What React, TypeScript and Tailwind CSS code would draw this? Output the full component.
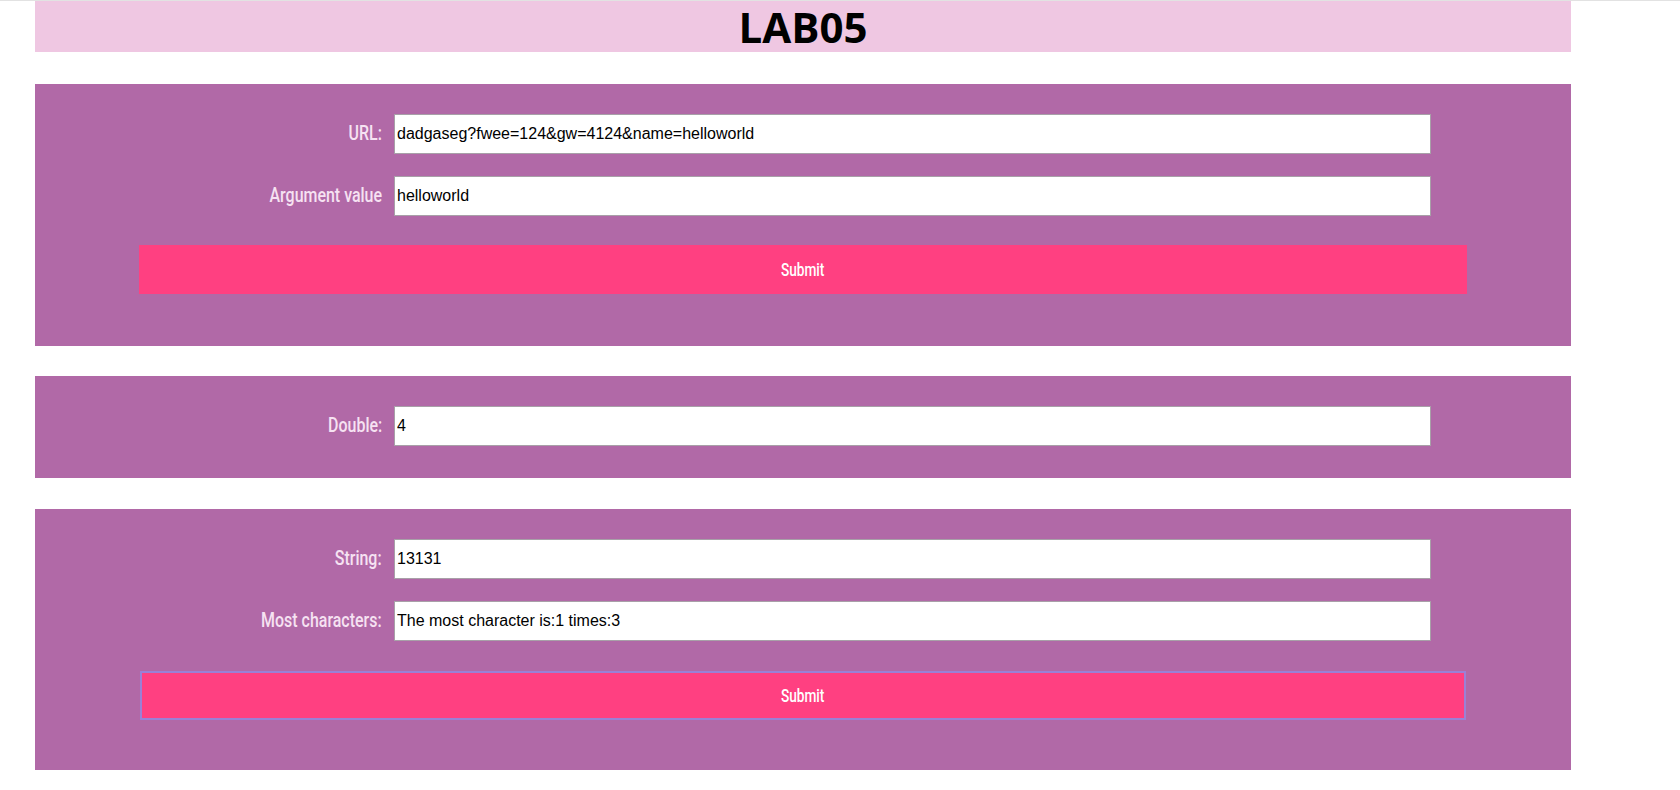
import React from "react";

function Row({ label, value, mt }: { label: string; value: string; mt?: string }) {
  return (
    <div className={`flex items-center ${mt ?? ""}`}>
      <div className="w-[347px] text-right">
        <span className="inline-block origin-right scale-x-[0.76] whitespace-nowrap text-[21px] font-medium text-[#f6e2f2] [font-family:Roboto,'Liberation_Sans',sans-serif]">
          {label}
        </span>
      </div>
      <input
        readOnly
        value={value}
        className="ml-[12px] h-[40px] w-[1037px] border border-[#a8a0a8] bg-white px-[2px] text-[16px] text-black outline-none [font-family:'Liberation_Sans',Arial,sans-serif]"
      />
    </div>
  );
}

function SubmitBtn({ focused }: { focused?: boolean }) {
  return (
    <div className="flex justify-center">
      <button
        className={`flex h-[49px] items-center justify-center bg-[#ff4081] ${
          focused ? "w-[1326px] border-2 border-[#9b80d6]" : "w-[1328px]"
        }`}
      >
        <span className="inline-block scale-x-[0.76] text-[18px] font-medium text-white [font-family:Roboto,'Liberation_Sans',sans-serif]">
          Submit
        </span>
      </button>
    </div>
  );
}

export default function App() {
  return (
    <div className="min-h-[790px] w-[1680px] border-t border-[#e2e2e2] bg-white">
      <div className="ml-[35px] w-[1536px]">
        <div className="flex h-[51px] items-center justify-center bg-[#efc7e2]">
          <h1 className="text-[42px] font-bold leading-none text-black [font-family:'Open_Sans','Noto_Sans',sans-serif]">
            LAB05
          </h1>
        </div>

        <div className="mt-[32px] bg-[#b169a7] pt-[30px] pb-[52px]">
          <Row label="URL:" value="dadgaseg?fwee=124&gw=4124&name=helloworld" />
          <Row label="Argument value" value="helloworld" mt="mt-[22px]" />
          <div className="mt-[29px]">
            <SubmitBtn />
          </div>
        </div>

        <div className="mt-[30px] bg-[#b169a7] pt-[30px] pb-[32px]">
          <Row label="Double:" value="4" />
        </div>

        <div className="mt-[31px] bg-[#b169a7] pt-[30px] pb-[50px]">
          <Row label="String:" value="13131" />
          <Row label="Most characters:" value="The most character is:1 times:3" mt="mt-[22px]" />
          <div className="mt-[30px]">
            <SubmitBtn focused />
          </div>
        </div>
      </div>
    </div>
  );
}
